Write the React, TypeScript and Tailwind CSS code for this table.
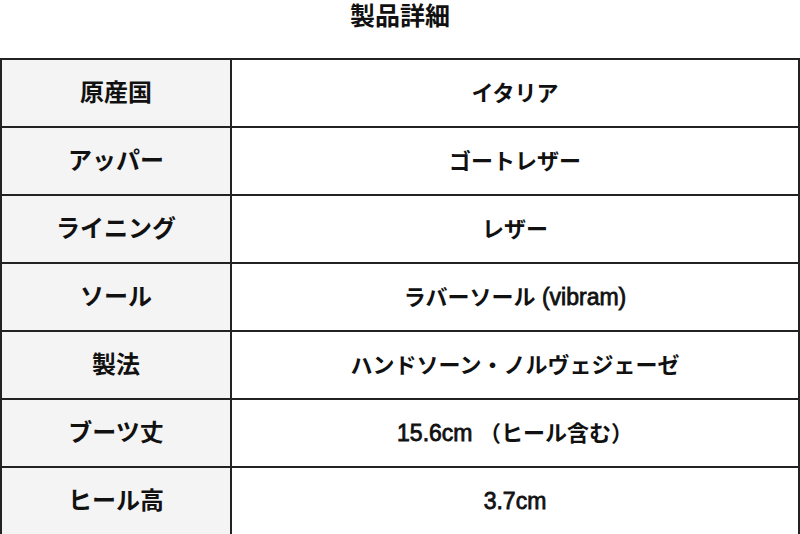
type Seg = string | { latin: string }

const rows: [string, Seg[]][] = [
  ['原産国', ['イタリア']],
  ['アッパー', ['ゴートレザー']],
  ['ライニング', ['レザー']],
  ['ソール', ['ラバーソール', { latin: ' (vibram)' }]],
  ['製法', ['ハンドソーン・ノルヴェジェーゼ']],
  ['ブーツ丈', [{ latin: '15.6cm ' }, '（ヒール含む）']],
  ['ヒール高', [{ latin: '3.7cm' }]],
]

export default function App() {
  return (
    <div
      className="w-[800px] h-[534px] bg-white text-[#111] overflow-hidden"
      style={{ fontFamily: '"Liberation Sans", "Noto Sans CJK JP", sans-serif' }}
    >
      <h2 className="h-[58px] text-center text-[25px] leading-[32px] font-bold">製品詳細</h2>
      <table className="w-[800px] border-collapse table-fixed">
        <colgroup>
          <col className="w-[230px]" />
          <col />
        </colgroup>
        <tbody>
          {rows.map(([label, value]) => (
            <tr key={label} className="h-[68px]">
              <td className="border-2 border-[#222] bg-[#f4f4f4] text-center align-middle text-[24px] font-bold">
                {label}
              </td>
              <td className="border-2 border-[#222] bg-white text-center align-middle text-[22px] font-bold whitespace-pre">
                {value.map((s, i) =>
                  typeof s === 'string' ? (
                    <span key={i}>{s}</span>
                  ) : (
                    <span key={i} className="font-normal text-[23px] [-webkit-text-stroke:0.8px_#111]">{s.latin}</span>
                  ),
                )}
              </td>
            </tr>
          ))}
        </tbody>
      </table>
    </div>
  )
}
